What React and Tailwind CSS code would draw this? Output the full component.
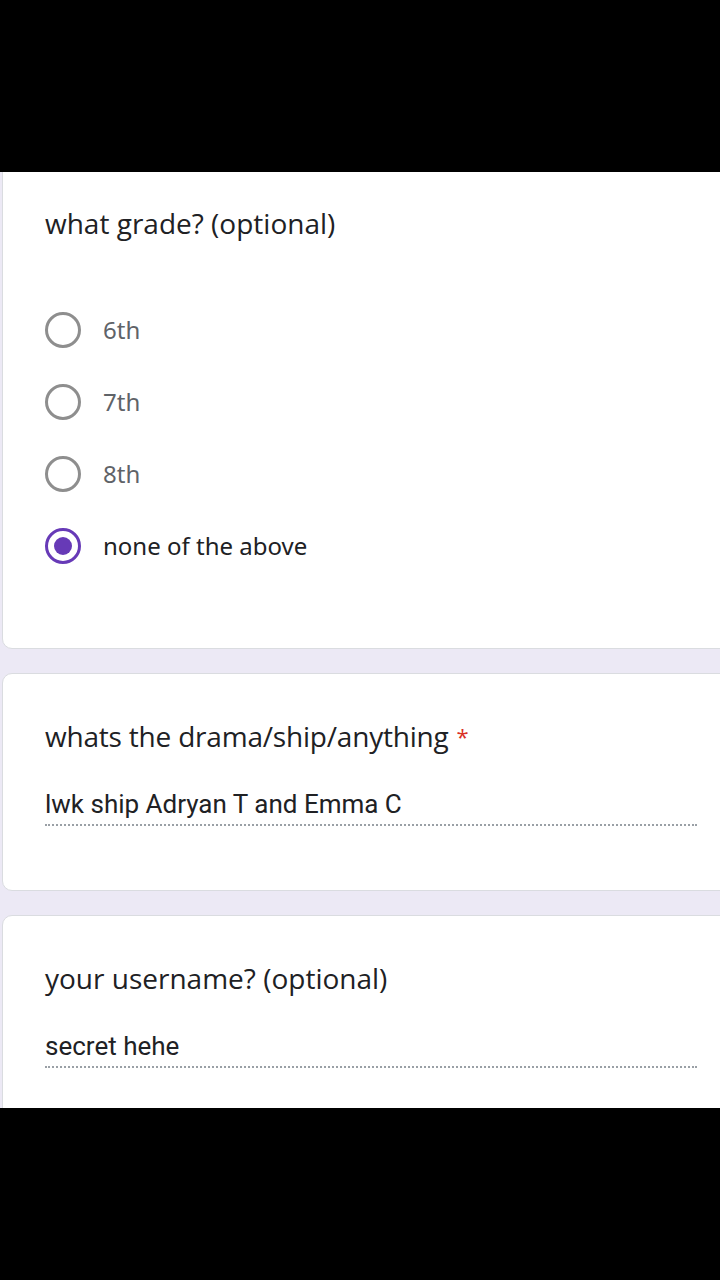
import { useState } from "react";

const titleFont = { fontFamily: '"Open Sans", "Noto Sans", sans-serif' };

function Radio({ label, checked, onClick }) {
  return (
    <div className="flex items-center h-[72px] cursor-pointer" onClick={onClick}>
      <div
        className={
          "w-[36px] h-[36px] rounded-full border-[3px] flex items-center justify-center " +
          (checked ? "border-[#673ab7]" : "border-[#8e8e8e]")
        }
      >
        {checked && <div className="w-[18px] h-[18px] rounded-full bg-[#673ab7]" />}
      </div>
      <span
        className={"ml-[22px] text-[24px] " + (checked ? "text-[#202124]" : "text-[#5f6368]")}
        style={{ fontFamily: '"Noto Sans", sans-serif' }}
      >
        {label}
      </span>
    </div>
  );
}

function Card({ children, className = "" }) {
  return (
    <div className={"ml-[2px] -mr-[12px] bg-white rounded-[10px] border border-[#dadce0] " + className}>
      {children}
    </div>
  );
}

function Answer({ text }) {
  return (
    <div>
      <div className="text-[26px] text-[#202124] leading-[32px]" style={{ fontFamily: 'Roboto, sans-serif' }}>
        {text}
      </div>
      <div className="mt-[4px] border-b-2 border-dotted border-[#9aa0a6] w-[652px]" />
    </div>
  );
}

export default function App() {
  const [grade, setGrade] = useState("none of the above");
  const grades = ["6th", "7th", "8th", "none of the above"];

  return (
    <div className="w-[720px] h-[1280px] bg-black flex flex-col overflow-hidden">
      <div className="h-[172px] shrink-0" />
      <div className="h-[936px] shrink-0 bg-[#ece9f5] overflow-hidden flex flex-col gap-[24px]">
        {/* grade question */}
        <Card className="-mt-[10px] pl-[42px] pt-[42px] pb-[66px] rounded-t-none">
          <h2 className="text-[28px] text-[#202124] leading-[36px]" style={titleFont}>
            what grade? (optional)
          </h2>
          <div className="mt-[53px]">
            {grades.map((g) => (
              <Radio key={g} label={g} checked={grade === g} onClick={() => setGrade(g)} />
            ))}
          </div>
        </Card>

        {/* drama question */}
        <Card className="pl-[42px] pt-[44px] pb-[64px]">
          <h2 className="text-[28px] text-[#202124] leading-[36px] tracking-[-0.2px]" style={titleFont}>
            whats the drama/ship/anything
            <span className="ml-[8px] text-[22px] align-top text-[#d93025]">*</span>
          </h2>
          <div className="mt-[34px]">
            <Answer text="lwk ship Adryan T and Emma C" />
          </div>
        </Card>

        {/* username question */}
        <Card className="pl-[42px] pt-[44px] pb-[64px]">
          <h2 className="text-[28px] text-[#202124] leading-[36px]" style={titleFont}>
            your username? (optional)
          </h2>
          <div className="mt-[34px]">
            <Answer text="secret hehe" />
          </div>
        </Card>
      </div>
      <div className="flex-1" />
    </div>
  );
}
